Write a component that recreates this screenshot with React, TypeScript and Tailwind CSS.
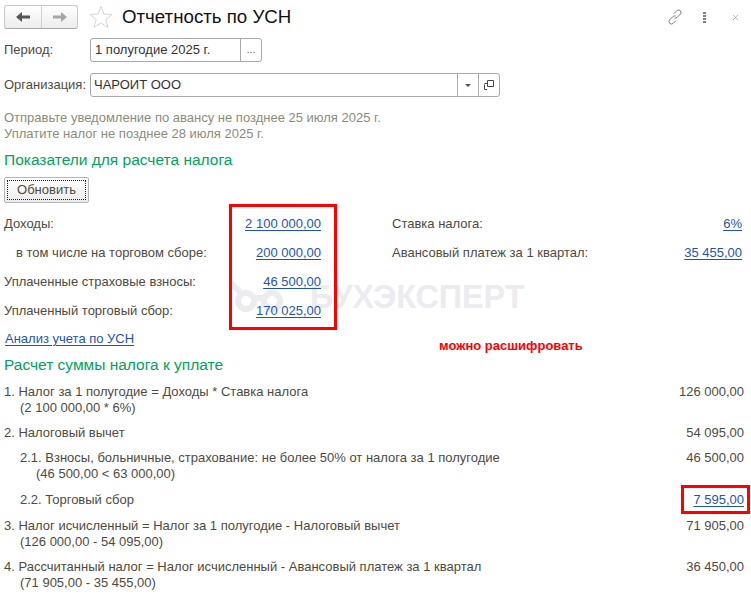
import { X } from "lucide-react"

const linkClass = "relative text-[#1d55b0] underline underline-offset-2"

function NavArrow({ dir, color }: { dir: "left" | "right"; color: string }) {
  const d = dir === "left" ? "M0 6 L6 1 V4.5 H14 V7.5 H6 V11 Z" : "M14 6 L8 1 V4.5 H0 V7.5 H8 V11 Z"
  return (
    <svg width="14" height="12" viewBox="0 0 14 12">
      <path d={d} fill={color} />
    </svg>
  )
}

function Star() {
  return (
    <svg width="24" height="24" viewBox="0 0 24 24" fill="none">
      <path d="M12 1.5 L15 9 L23 9.5 L16.8 14.6 L19 22.5 L12 18 L5 22.5 L7.2 14.6 L1 9.5 L9 9 Z" stroke="#d2d5d8" strokeWidth="1" />
    </svg>
  )
}

function Header() {
  return (
    <div className="flex h-[26px] items-center pl-1 pr-[11px]">
      <div className="flex h-[24px] w-[74px] rounded-[3px] border border-[#c8c8c8] border-b-[#a8a8a8] bg-gradient-to-b from-white to-[#ececec]">
        <div className="flex w-[37px] items-center justify-center border-r border-[#d0d0d0]">
          <NavArrow dir="left" color="#555555" />
        </div>
        <div className="flex flex-1 items-center justify-center">
          <NavArrow dir="right" color="#a6a6a6" />
        </div>
      </div>
      <div className="ml-[11px]">
        <Star />
      </div>
      <div className="ml-[9px] text-[18.7px] leading-[26px] text-[#111111]">Отчетность по УСН</div>
      <div className="ml-auto flex items-center">
        <svg width="16" height="18" viewBox="0 0 16 18" fill="none" stroke="#7a7a7a" strokeWidth="1">
          <path d="M7 5.5 L10 2.5 a2.5 2.5 0 0 1 3.5 3.5 L10 9.5 a2.5 2.5 0 0 1 -2.5 .5" />
          <path d="M9 12.5 L6 15.5 a2.5 2.5 0 0 1 -3.5 -3.5 L6 8.5 a2.5 2.5 0 0 1 2.5 -.5" />
        </svg>
        <div className="ml-[20px] flex flex-col gap-[1px]">
          <span className="h-[2px] w-[3px] bg-[#808080]" />
          <span className="h-[2px] w-[3px] bg-[#808080]" />
          <span className="h-[2px] w-[3px] bg-[#808080]" />
          <span className="h-[2px] w-[3px] bg-[#808080]" />
        </div>
        <X className="ml-[25px] text-[#707070]" size={9} strokeWidth={1.2} />
      </div>
    </div>
  )
}

function Filters() {
  return (
    <div className="mt-[8px] flex flex-col gap-[11px] pl-1">
      <div className="flex items-center">
        <div className="w-[86px] text-[#4f4a40]">Период:</div>
        <div className="flex h-[24px] w-[172px] rounded-[3px] border border-[#a9a9a9]">
          <div className="flex flex-1 items-center border-r border-[#a9a9a9] pl-[4px] text-[#333333]">1 полугодие 2025 г.</div>
          <div className="flex w-[20px] items-center justify-center text-[10px] text-[#555555]">...</div>
        </div>
      </div>
      <div className="flex items-center">
        <div className="w-[86px] text-[#4f4a40]">Организация:</div>
        <div className="flex h-[24px] w-[410px] rounded-[3px] border border-[#a9a9a9]">
          <div className="flex flex-1 items-center border-r border-[#a9a9a9] pl-[3px] text-[#333333]">ЧАРОИТ ООО</div>
          <div className="flex w-[21px] items-center justify-center border-r border-[#a9a9a9]">
            <svg width="6" height="3" viewBox="0 0 6 3">
              <path d="M0 0 H6 L3 3 Z" fill="#555555" />
            </svg>
          </div>
          <div className="flex w-[20px] items-center justify-center">
            <svg width="10" height="10" viewBox="0 0 10 10" fill="none" stroke="#444444">
              <path d="M3.5 .5 H9.5 V6.5 H3.5 Z" />
              <path d="M.5 4.5 V9.5" />
              <path d="M.5 3.5 H3 M.5 9.5 H3" />
            </svg>
          </div>
        </div>
      </div>
    </div>
  )
}

const leftRows = [
  { label: "Доходы:", value: "2 100 000,00", indent: false },
  { label: "в том числе на торговом сборе:", value: "200 000,00", indent: true },
  { label: "Уплаченные страховые взносы:", value: "46 500,00", indent: false },
  { label: "Уплаченный торговый сбор:", value: "170 025,00", indent: false },
]

const rightRows = [
  { label: "Ставка налога:", value: "6%" },
  { label: "Авансовый платеж за 1 квартал:", value: "35 455,00" },
]

function Indicators() {
  return (
    <div className="relative mt-[6px] flex pl-1">
      {/* watermark, sits behind the numbers */}
      <div className="absolute left-[229px] top-[70px] flex items-center gap-[25px] text-[32.3px] leading-[36px] font-bold text-[#ebebf0]">
        <svg width="56" height="32" viewBox="0 0 56 32" fill="none" stroke="#ebebf0" strokeWidth="6">
          <circle cx="17" cy="20" r="8" />
          <circle cx="43" cy="20" r="8" />
          <path d="M2 2 L11 11 M25 17 L35 17" />
        </svg>
        <span>БУХЭКСПЕРТ</span>
      </div>
      <div className="relative w-[317px]">
        {leftRows.map((r) => (
          <div key={r.label} className="flex h-[29px] items-center justify-between">
            <span className={r.indent ? "pl-3 text-[#4f4a40]" : "text-[#4f4a40]"}>{r.label}</span>
            <span className={linkClass}>{r.value}</span>
          </div>
        ))}
      </div>
      <div className="relative ml-[71px] w-[350px]">
        {rightRows.map((r) => (
          <div key={r.label} className="flex h-[29px] items-center justify-between">
            <span className="text-[#4f4a40]">{r.label}</span>
            <span className={linkClass}>{r.value}</span>
          </div>
        ))}
      </div>
      {/* red marker over the first column values */}
      <div className="absolute left-[229px] top-[-5px] h-[126px] w-[108px] border-[3px] border-[#ff0000]" />
    </div>
  )
}

type CalcRow = {
  title: string
  sub?: string
  value: string
  link?: boolean
  indent?: boolean
  mt: string
}

const calcRows: CalcRow[] = [
  { title: "1. Налог за 1 полугодие = Доходы * Ставка налога", sub: "(2 100 000,00 * 6%)", value: "126 000,00", mt: "mt-0" },
  { title: "2. Налоговый вычет", value: "54 095,00", mt: "mt-[9px]" },
  { title: "2.1. Взносы, больничные, страхование: не более 50% от налога за 1 полугодие", sub: "(46 500,00 < 63 000,00)", value: "46 500,00", indent: true, mt: "mt-[9px]" },
  { title: "2.2. Торговый сбор", value: "7 595,00", link: true, indent: true, mt: "mt-[10px]" },
  { title: "3. Налог исчисленный = Налог за 1 полугодие - Налоговый вычет", sub: "(126 000,00 - 54 095,00)", value: "71 905,00", mt: "mt-[10px]" },
  { title: "4. Рассчитанный налог = Налог исчисленный - Авансовый платеж за 1 квартал", sub: "(71 905,00 - 35 455,00)", value: "36 450,00", mt: "mt-[9px]" },
]

function Calculation() {
  return (
    <div className="mt-[9px] pl-1 pr-[7px]">
      {calcRows.map((r) => (
        <div key={r.title} className={`relative flex justify-between leading-[16px] ${r.mt}`}>
          <div className={r.indent ? "pl-[16px] text-[#4f4a40]" : "text-[#4f4a40]"}>
            <div>{r.title}</div>
            {r.sub && <div className="pl-[16px]">{r.sub}</div>}
          </div>
          <div className={r.link ? linkClass : "text-[#4f4a40]"}>{r.value}</div>
          {r.link && <div className="absolute right-[-6px] top-[-7px] h-[29px] w-[69px] border-[3px] border-[#ff0000]" />}
        </div>
      ))}
    </div>
  )
}

export default function App() {
  return (
    <div className="h-[596px] w-[751px] overflow-hidden bg-white pt-[4px] font-['Liberation_Sans',Arial,sans-serif] text-[13px] leading-[16px]">
      <Header />
      <Filters />
      <div className="mt-[13px] pl-1 text-[#8c8c78]">
        <div>Отправьте уведомление по авансу не позднее 25 июля 2025 г.</div>
        <div>Уплатите налог не позднее 28 июля 2025 г.</div>
      </div>
      <div className="mt-[8px] pl-1 text-[15.5px] leading-[20px] text-[#00a35c]">Показатели для расчета налога</div>
      <div className="mt-[7px] pl-1">
        <button className="flex h-[26px] w-[85px] items-center justify-center rounded-[2px] border border-[#b4b4b4] bg-gradient-to-b from-white to-[#ececec] p-[2px] text-[#4f4a40]">
          <span className="flex h-full w-full items-center justify-center border border-dotted border-[#222222]">Обновить</span>
        </button>
      </div>
      <Indicators />
      <div className="mt-[6px] flex pl-[5px]">
        <span className="text-[#1d55b0] underline underline-offset-2">Анализ учета по УСН</span>
      </div>
      <div className="relative mt-[8px] pl-1 text-[15.5px] leading-[20px] text-[#00a35c]">
        Расчет суммы налога к уплате
        <div className="absolute left-[439px] top-[-17px] text-[13px] leading-[16px] font-bold text-[#ff0000]">можно расшифровать</div>
      </div>
      <Calculation />
    </div>
  )
}
